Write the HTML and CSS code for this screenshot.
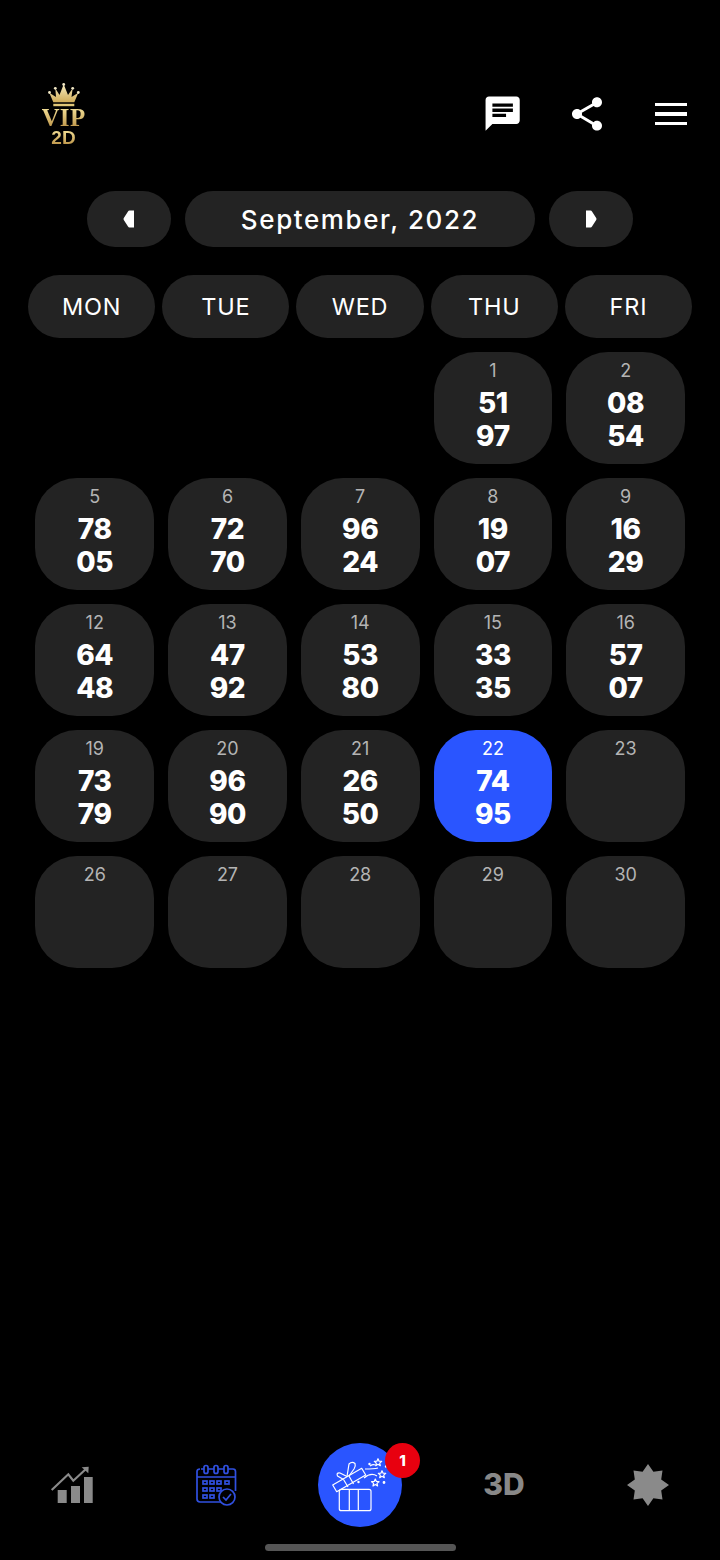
FILE: index.html
```html
<!DOCTYPE html>
<html lang="en">
<head>
<meta charset="UTF-8">
<meta name="viewport" content="width=device-width, initial-scale=1.0">
<title>VIP 2D Calendar</title>
<link rel="stylesheet" href="styles.css">
</head>
<body>

<div class="page">
  <!-- Header -->
  <div class="header">
    <div class="logo">
      <svg class="crown" width="32" height="24" viewBox="0 0 32 24">
        <defs>
          <linearGradient id="gold" x1="0" y1="0" x2="0" y2="1">
            <stop offset="0" stop-color="#f7ecc0"/>
            <stop offset="1" stop-color="#d0ac58"/>
          </linearGradient>
        </defs>
        <path d="M5.300 19.300 1.300 9.700 8 14 7.300 5.300 11.500 12 15.700 1.300 20 12 24.700 5.300 23.500 14 30.300 9.700 26.300 19.300z" fill="url(#gold)"/>
        <circle cx="1.500" cy="9.500" r="1.400" fill="#f0e6c4"/>
        <circle cx="7.300" cy="5.300" r="1.400" fill="#f0e6c4"/>
        <circle cx="15.700" cy="1.500" r="1.400" fill="#f0e6c4"/>
        <circle cx="24.700" cy="5.300" r="1.400" fill="#f0e6c4"/>
        <circle cx="30.300" cy="9.500" r="1.400" fill="#f0e6c4"/>
        <rect x="5.300" y="20.800" width="21" height="2.400" fill="#e0c678"/>
      </svg>
      <span class="logo-vip">VIP</span>
      <span class="logo-2d">2D</span>
    </div>
    <div class="header-icons">
      <div class="icon-btn">
        <svg width="41" height="41" viewBox="0.5 0.5 24 24" fill="#fff"><path d="M20 2H4c-1.100 0-2 .9-2 2v18l4-4h14c1.100 0 2-.9 2-2V4c0-1.100-.9-2-2-2zM6 9h12v2H6V9zm8 5H6v-2h8v2zm4-6H6V6h12v2z"/></svg>
      </div>
      <div class="icon-btn">
        <svg width="40" height="40" viewBox="0 0 24 24" fill="#fff"><path d="M18 16.100c-.8 0-1.500.3-2 .8L8.900 12.700c.1-.2.1-.5.1-.7s0-.5-.1-.7L16 7.200c.5.5 1.200.8 2 .8 1.700 0 3-1.300 3-3s-1.300-3-3-3-3 1.300-3 3c0 .2 0 .5.1.7L8 9.800C7.500 9.300 6.800 9 6 9c-1.700 0-3 1.300-3 3s1.300 3 3 3c.8 0 1.500-.3 2-.8l7.100 4.200c-.1.200-.1.400-.1.600 0 1.600 1.300 2.900 3 2.900s3-1.300 3-2.900-1.300-2.900-3-2.900z"/></svg>
      </div>
      <div class="icon-btn">
        <div class="burger"><span></span><span></span><span></span></div>
      </div>
    </div>
  </div>

  <!-- Month selector -->
  <div class="month-nav">
    <div class="month-arrow">
      <svg width="12" height="18" viewBox="0 0 12 18"><path d="M11 .5V17.500H6.500Q5.500 17.500 5 16.500L.8 10Q.2 9 .8 8L5 1.500Q5.500 .5 6.500 .5z" fill="#fff"/></svg>
    </div>
    <div class="month-title">September, 2022</div>
    <div class="month-arrow">
      <svg width="12" height="18" viewBox="0 0 12 18"><path d="M1 .5V17.500H5.500Q6.500 17.500 7 16.500L11.200 10Q11.800 9 11.200 8L7 1.500Q6.500 .5 5.500 .5z" fill="#fff"/></svg>
    </div>
  </div>

  <!-- Weekdays -->
  <div class="weekdays">
    <div class="weekday">MON</div>
    <div class="weekday">TUE</div>
    <div class="weekday">WED</div>
    <div class="weekday">THU</div>
    <div class="weekday">FRI</div>
  </div>

  <!-- Calendar -->
  <div class="calendar">
    <div></div>
    <div></div>
    <div></div>
    <div class="day"><span class="day-num">1</span><span class="result">51</span><span class="result">97</span></div>
    <div class="day"><span class="day-num">2</span><span class="result">08</span><span class="result">54</span></div>

    <div class="day"><span class="day-num">5</span><span class="result">78</span><span class="result">05</span></div>
    <div class="day"><span class="day-num">6</span><span class="result">72</span><span class="result">70</span></div>
    <div class="day"><span class="day-num">7</span><span class="result">96</span><span class="result">24</span></div>
    <div class="day"><span class="day-num">8</span><span class="result">19</span><span class="result">07</span></div>
    <div class="day"><span class="day-num">9</span><span class="result">16</span><span class="result">29</span></div>

    <div class="day"><span class="day-num">12</span><span class="result">64</span><span class="result">48</span></div>
    <div class="day"><span class="day-num">13</span><span class="result">47</span><span class="result">92</span></div>
    <div class="day"><span class="day-num">14</span><span class="result">53</span><span class="result">80</span></div>
    <div class="day"><span class="day-num">15</span><span class="result">33</span><span class="result">35</span></div>
    <div class="day"><span class="day-num">16</span><span class="result">57</span><span class="result">07</span></div>

    <div class="day"><span class="day-num">19</span><span class="result">73</span><span class="result">79</span></div>
    <div class="day"><span class="day-num">20</span><span class="result">96</span><span class="result">90</span></div>
    <div class="day"><span class="day-num">21</span><span class="result">26</span><span class="result">50</span></div>
    <div class="day today"><span class="day-num">22</span><span class="result">74</span><span class="result">95</span></div>
    <div class="day"><span class="day-num">23</span></div>

    <div class="day"><span class="day-num">26</span></div>
    <div class="day"><span class="day-num">27</span></div>
    <div class="day"><span class="day-num">28</span></div>
    <div class="day"><span class="day-num">29</span></div>
    <div class="day"><span class="day-num">30</span></div>
  </div>

  <!-- Bottom tabs -->
  <div class="tabbar">
    <div class="tab">
      <svg width="46" height="40" viewBox="0 0 46 40">
        <rect x="8.700" y="25" width="9" height="13" fill="#8a8a8a"/>
        <rect x="22" y="21" width="9" height="17" fill="#8a8a8a"/>
        <rect x="35" y="12" width="8.700" height="26" fill="#8a8a8a"/>
        <path d="M2.700 25 19.300 9.300 24.300 15.700 37.500 3.500" fill="none" stroke="#8a8a8a" stroke-width="2.200"/>
        <path d="M39.700 1.700 32.700 2.300 39.300 8.300z" fill="#8a8a8a"/>
      </svg>
    </div>
    <div class="tab">
      <svg width="42" height="42" viewBox="0 0 42 42" fill="none" stroke="#3050e0" stroke-width="1.700">
        <path d="M6 5h32q2.500 0 2.500 2.500V27M30 38H5q-3 0-3-3V7.500Q2 5 5 5"/>
        <path d="M2 13h38"/>
        <rect x="9" y="1.500" width="4" height="8" rx="2" fill="#000"/>
        <rect x="19" y="1.500" width="4" height="8" rx="2" fill="#000"/>
        <rect x="29" y="1.500" width="4" height="8" rx="2" fill="#000"/>
        <rect x="8" y="17" width="4" height="3"/>
        <rect x="15" y="17" width="4" height="3"/>
        <rect x="22" y="17" width="4" height="3"/>
        <rect x="30" y="17" width="4" height="3"/>
        <rect x="8" y="24" width="4" height="3"/>
        <rect x="15" y="24" width="4" height="3"/>
        <rect x="22" y="24" width="4" height="3"/>
        <rect x="8" y="31" width="4" height="3"/>
        <rect x="15" y="31" width="4" height="3"/>
        <circle cx="32" cy="33" r="8" fill="#000"/>
        <path d="M28 33l3 3 5-6"/>
      </svg>
    </div>
    <div class="tab">
      <div class="gift">
        <svg width="84" height="84" viewBox="0 0 84 84" fill="none" stroke="#fff" stroke-width="1.200" stroke-linejoin="round">
          <rect x="21.300" y="46.300" width="31.700" height="21.400" rx="2"/>
          <path d="M31.300 46.300v21.400M40.300 46.300v21.400"/>
          <path d="M14.700 42 43.700 25.300 47.700 32 18.700 48.700z"/>
          <path d="M25.500 36.500 30 44M31 33 35.500 41"/>
          <path d="M25.500 36.500 19.500 33Q18 29.500 22 30L29 33.500"/>
          <path d="M29 33.500 31 21Q34 18 37 20.500 38 23 36 26L31 33"/>
          <path d="M47 26Q56 26 60 25M46 35Q53 29 59 33M52 23Q55 21 57 22"/>
          <path d="M60 15.700 61.100 18.200 63.700 18.400 61.700 20.100 62.300 22.700 60 21.300 57.700 22.700 58.300 20.100 56.300 18.400 58.900 18.200z"/>
          <path d="M64 27.700 65.100 30.200 67.700 30.400 65.700 32.100 66.300 34.700 64 33.300 61.700 34.700 62.300 32.100 60.300 30.400 62.900 30.200z"/>
          <path d="M57.300 36 58.400 38.500 61 38.700 59 40.400 59.600 43 57.300 41.600 55 43 55.600 40.400 53.600 38.700 56.200 38.500z"/>
          <circle cx="51.500" cy="21" r=".6" fill="#fff"/>
          <circle cx="66" cy="39.500" r=".8" fill="#fff"/>
          <circle cx="40.500" cy="39" r=".6" fill="#fff"/>
          <circle cx="68" cy="23.500" r=".6" fill="#fff"/>
        </svg>
        <span class="gift-badge">1</span>
      </div>
    </div>
    <div class="tab"><span class="tab-3d">3D</span></div>
    <div class="tab">
      <svg width="42" height="42" viewBox="0 0 42 42"><path d="M21 0 26.400 7.800 35.500 6.500 34.200 15.600 42 21 34.200 26.400 35.500 35.500 26.400 34.200 21 42 15.600 34.200 6.500 35.500 7.800 26.400 0 21 7.800 15.600 6.500 6.500 15.600 7.800z" fill="#8a8a8a"/></svg>
    </div>
  </div>

  <div class="home-bar"></div>
</div>

</body>
</html>
```

FILE: styles.css
```css
body {
  font-family: 'Inter', 'Noto Sans', sans-serif;
  background-color: #000;
  color: #fff;
  margin: 0;
}

.page {
  display: flex;
  flex-direction: column;
  height: 1560px;
  overflow: hidden;
}

/* Header */
.header {
  display: flex;
  justify-content: space-between;
  align-items: center;
  height: 84px;
  margin-top: 72px;
  padding: 0 7px 0 42px;
}

.logo {
  display: flex;
  flex-direction: column;
  align-items: center;
  width: 43px;
}

.crown {
  display: block;
  flex: none;
}

.logo-vip, .logo-2d {
  background: linear-gradient(#f6e49c, #b98f42);
  -webkit-background-clip: text;
  background-clip: text;
  color: transparent;
  font-weight: bold;
}

.logo-vip {
  font-family: 'Liberation Serif', serif;
  font-size: 25px;
  line-height: 22px;
  letter-spacing: 0.3px;
}

.logo-2d {
  font-family: 'Liberation Sans', sans-serif;
  font-size: 19px;
  line-height: 17px;
}

.header-icons {
  display: flex;
}

.icon-btn {
  display: flex;
  justify-content: center;
  align-items: center;
  width: 84px;
  height: 84px;
}

.burger {
  display: flex;
  flex-direction: column;
  gap: 6px;
  width: 32px;
}

.burger span {
  height: 3.5px;
  background: #fff;
}

/* Month selector */
.month-nav {
  display: flex;
  justify-content: center;
  gap: 14px;
  margin-top: 35px;
}

.month-arrow, .month-title {
  display: flex;
  justify-content: center;
  align-items: center;
  height: 56px;
  background: #232323;
  border-radius: 28px;
}

.month-arrow {
  width: 84px;
}

.month-title {
  width: 350px;
  font-size: 26px;
  font-weight: 500;
  letter-spacing: 1.6px;
}

/* Weekdays */
.weekdays {
  display: grid;
  grid-template-columns: repeat(5, 1fr);
  gap: 7px;
  margin-top: 28px;
  padding: 0 28px;
}

.weekday {
  display: flex;
  justify-content: center;
  align-items: center;
  height: 63px;
  background: #232323;
  border-radius: 32px;
  font-size: 23.5px;
  letter-spacing: 0.8px;
}

/* Calendar */
.calendar {
  display: grid;
  grid-template-columns: repeat(5, 1fr);
  grid-auto-rows: 112px;
  gap: 14px;
  margin-top: 14px;
  padding: 0 35px 0 35.4px;
}

.day {
  display: flex;
  flex-direction: column;
  align-items: center;
  padding-top: 8px;
  background: #232323;
  border-radius: 42px;
}

.day-num {
  font-size: 18px;
  line-height: 22px;
  color: #b4b4b4;
}

.result {
  font-size: 28px;
  font-weight: 800;
  line-height: 33px;
  letter-spacing: -0.4px;
}

.day-num + .result {
  margin-top: 5px;
}

.today {
  background: #2a55ff;
}

.today .day-num {
  color: #fff;
}

/* Bottom tabs */
.tabbar {
  display: grid;
  grid-template-columns: repeat(5, 1fr);
  margin-top: auto;
  height: 84px;
}

.tab {
  display: flex;
  justify-content: center;
  align-items: center;
}

.gift {
  position: relative;
  width: 84px;
  height: 84px;
  background: #2a55ff;
  border-radius: 50%;
}

.gift svg {
  display: block;
}

.gift-badge {
  position: absolute;
  top: 0;
  right: -18px;
  width: 35px;
  height: 35px;
  background: #e8000f;
  border-radius: 50%;
  font-size: 15px;
  font-weight: 800;
  line-height: 35px;
  text-align: center;
}

.tab-3d {
  margin-top: -3px;
  font-size: 30px;
  font-weight: 800;
  color: #888;
}

.home-bar {
  width: 191px;
  height: 7px;
  margin: 17px auto 9px;
  background: #555;
  border-radius: 4px;
}
```
